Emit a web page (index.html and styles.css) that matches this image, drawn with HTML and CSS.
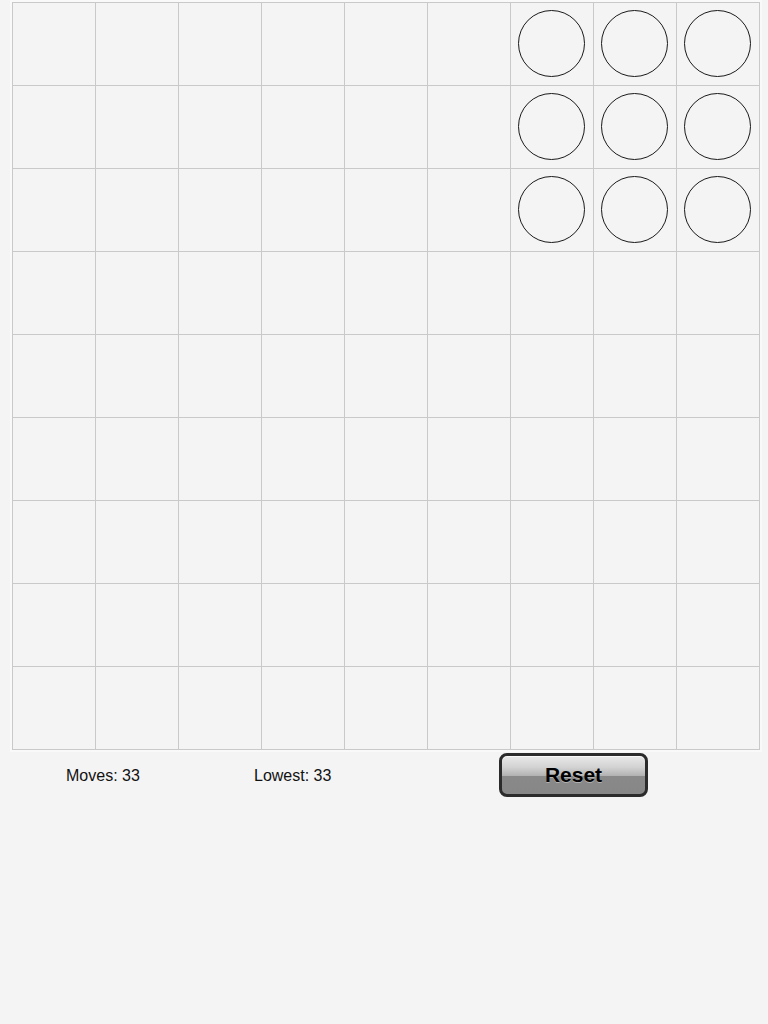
FILE: index.html
```html
<!DOCTYPE html>
<html>
<head>
<meta charset="utf-8">
<link rel="stylesheet" href="styles.css">
</head>
<body>
<div class="board-wrap">
  <div class="board">
    <div class="cell"></div><div class="cell"></div><div class="cell"></div><div class="cell"></div><div class="cell"></div><div class="cell"></div>
    <div class="cell"><span class="peg"></span></div><div class="cell"><span class="peg"></span></div><div class="cell"><span class="peg"></span></div>
    <div class="cell"></div><div class="cell"></div><div class="cell"></div><div class="cell"></div><div class="cell"></div><div class="cell"></div>
    <div class="cell"><span class="peg"></span></div><div class="cell"><span class="peg"></span></div><div class="cell"><span class="peg"></span></div>
    <div class="cell"></div><div class="cell"></div><div class="cell"></div><div class="cell"></div><div class="cell"></div><div class="cell"></div>
    <div class="cell"><span class="peg"></span></div><div class="cell"><span class="peg"></span></div><div class="cell"><span class="peg"></span></div>
    <div class="cell"></div><div class="cell"></div><div class="cell"></div><div class="cell"></div><div class="cell"></div><div class="cell"></div><div class="cell"></div><div class="cell"></div><div class="cell"></div>
    <div class="cell"></div><div class="cell"></div><div class="cell"></div><div class="cell"></div><div class="cell"></div><div class="cell"></div><div class="cell"></div><div class="cell"></div><div class="cell"></div>
    <div class="cell"></div><div class="cell"></div><div class="cell"></div><div class="cell"></div><div class="cell"></div><div class="cell"></div><div class="cell"></div><div class="cell"></div><div class="cell"></div>
    <div class="cell"></div><div class="cell"></div><div class="cell"></div><div class="cell"></div><div class="cell"></div><div class="cell"></div><div class="cell"></div><div class="cell"></div><div class="cell"></div>
    <div class="cell"></div><div class="cell"></div><div class="cell"></div><div class="cell"></div><div class="cell"></div><div class="cell"></div><div class="cell"></div><div class="cell"></div><div class="cell"></div>
    <div class="cell"></div><div class="cell"></div><div class="cell"></div><div class="cell"></div><div class="cell"></div><div class="cell"></div><div class="cell"></div><div class="cell"></div><div class="cell"></div>
  </div>
</div>
<div class="status">
  <span class="stat moves">Moves: 33</span>
  <span class="stat lowest">Lowest: 33</span>
  <button class="reset">Reset</button>
</div>
</body>
</html>
```

FILE: styles.css
```css
html, body {
  margin: 0;
  padding: 0;
  background: #f4f4f4;
  font-family: "Liberation Sans", Arial, sans-serif;
}

.board-wrap {
  margin-left: 10px;
  width: 748px;
  padding: 2px;
  background: #f9f9f9;
}

.board {
  display: grid;
  grid-template-columns: repeat(9, 83px);
  grid-auto-rows: 83px;
  border-left: 1px solid #c9c9c9;
  border-top: 1px solid #c9c9c9;
  background: #f4f4f4;
}

.cell {
  border-right: 1px solid #c9c9c9;
  border-bottom: 1px solid #c9c9c9;
  display: flex;
  align-items: flex-start;
  justify-content: flex-start;
  padding: 7px 0 0 7px;
}

.peg {
  width: 65px;
  height: 65px;
  border: 1px solid #1a1a1a;
  border-radius: 50%;
  box-sizing: content-box;
}

.status {
  display: flex;
  align-items: center;
  height: 46px;
}

.stat {
  font-size: 16px;
  color: #111;
  padding-top: 2px;
}

.moves {
  margin-left: 66px;
  width: 188px;
}

.lowest {
  width: 245px;
}

.reset {
  width: 149px;
  height: 44px;
  padding: 0;
  border: 3px solid #2b2b2b;
  border-radius: 8px;
  background: linear-gradient(to bottom, #e9e9e9 0%, #d2d2d2 30%, #b2b2b2 52%, #898989 52%, #878787 100%);
  box-shadow: inset 0 1px 0 #f8f8f8;
  font-family: "Liberation Sans", Arial, sans-serif;
  font-weight: bold;
  font-size: 21px;
  color: #000;
  text-shadow: 0 1px 0 rgba(255,255,255,0.35);
  cursor: pointer;
}
```
